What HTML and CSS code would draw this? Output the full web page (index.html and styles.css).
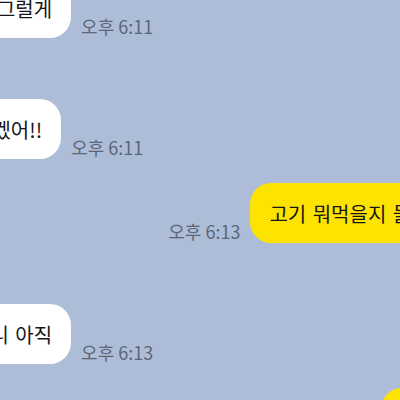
FILE: index.html
```html
<!DOCTYPE html>
<html>
<head>
    <title>채팅</title>
    <link rel="stylesheet" href="styles.css">
</head>
<body>
    <div class="chat">
        <div class="row you first">
            <div class="bubble cut-1">응 그럴게</div>
            <span class="time">오후 6:11</span>
        </div>

        <div class="row you">
            <div class="bubble cut-2">알겠어!!</div>
            <span class="time">오후 6:11</span>
        </div>

        <div class="row me near">
            <span class="time">오후 6:13</span>
            <div class="bubble yellow">고기 뭐먹을지 물어봐</div>
        </div>

        <div class="row you">
            <div class="bubble cut-3">아니 아직</div>
            <span class="time">오후 6:13</span>
        </div>

        <div class="row me near last">
            <div class="bubble yellow">응응</div>
        </div>
    </div>
</body>
</html>
```

FILE: styles.css
```css
html, body {
    margin: 0;
    height: 100%;
    overflow: hidden;
}

body {
    background-color: #adbdd7;
    font-family: "Noto Sans CJK KR", "Noto Sans", sans-serif;
    color: #161616;
}

.chat {
    display: flex;
    flex-direction: column;
}

.row {
    display: flex;
    align-items: flex-end;
    gap: 10px;
    margin-top: 61px;
}

.row.near {
    margin-top: 24px;
}

.row.first {
    margin-top: -22px;
}

.row.me {
    justify-content: flex-end;
    margin-right: -67px;
}

.row.last {
    margin-right: -56px;
}

.bubble {
    height: 60px;
    display: flex;
    align-items: center;
    padding: 0 19px;
    border-radius: 21px;
    background-color: #fff;
    font-size: 20px;
    word-spacing: 2px;
    white-space: nowrap;
    flex-shrink: 0;
}

.bubble.yellow {
    background-color: #fde300;
}

.cut-1 {
    margin-left: -47px;
}

.cut-2 {
    margin-left: -45px;
}

.cut-3 {
    margin-left: -47px;
}

.time {
    font-size: 18px;
    line-height: 1.2;
    color: #5b6678;
    white-space: nowrap;
}
```
